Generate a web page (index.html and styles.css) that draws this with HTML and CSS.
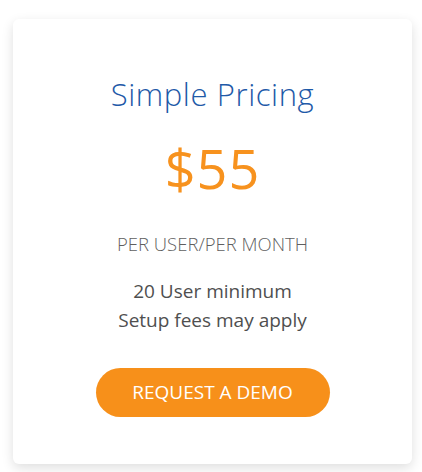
FILE: index.html
```html
<!DOCTYPE html>
<html lang="en">
    <head>
        <meta charset="UTF-8">
        <title>Simple Pricing</title>
        <link rel="stylesheet" href="styles.css">
    </head>
    <body>
        <div class="pricing-card">
            <h2 class="pricing-title">Simple Pricing</h2>
            <div class="pricing-price">$55</div>
            <div class="pricing-unit">PER USER/PER MONTH</div>
            <p class="pricing-notes">
                20 User minimum<br>
                Setup fees may apply
            </p>
            <a class="demo-btn" href="#">REQUEST A DEMO</a>
        </div>
    </body>
</html>
```

FILE: styles.css
```css
body {
    font-family: 'Open Sans', 'Lato', sans-serif;
    background: #fff;
    margin: 0;
    padding: 19px 10px 8px 13px;
    color: #555;
}
.pricing-card {
    width: 399px;
    height: 445px;
    box-sizing: border-box;
    background: #fff;
    border-radius: 6px;
    box-shadow: 0 4px 12px rgba(0,0,0,0.13);
    display: flex;
    flex-direction: column;
    align-items: center;
    padding-top: 55px;
    text-align: center;
}
.pricing-title {
    margin: 0;
    font-size: 31px;
    font-weight: 300;
    letter-spacing: 0.6px;
    color: #1f5aa8;
    line-height: 40px;
}
.pricing-price {
    margin-top: 22px;
    font-size: 54px;
    font-weight: 400;
    letter-spacing: 1px;
    color: #f7921e;
    line-height: 64px;
}
.pricing-unit {
    margin-top: 32px;
    font-size: 18.5px;
    font-weight: 300;
    color: #5f5f5f;
    line-height: 24px;
}
.pricing-notes {
    margin: 21px 0 0;
    font-size: 19px;
    color: #4f4f4f;
    line-height: 29px;
}
.demo-btn {
    margin-top: 33px;
    width: 234px;
    height: 49px;
    line-height: 49px;
    border-radius: 25px;
    background: #f7901a;
    color: #fff;
    font-size: 19px;
    font-weight: 400;
    text-decoration: none;
}
```
